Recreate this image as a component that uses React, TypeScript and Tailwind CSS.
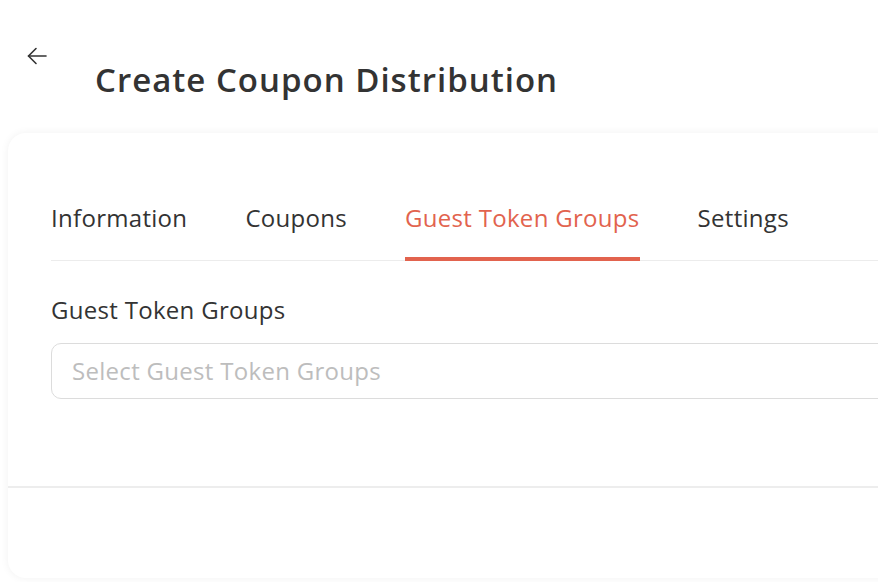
import React from 'react';

const tabs = ['Information', 'Coupons', 'Guest Token Groups', 'Settings'];

function App() {
  const active = 2;

  return (
    <div className="h-[582px] w-[878px] overflow-hidden bg-white text-[#333] font-['Open_Sans',sans-serif]">
      {/* Header */}
      <div className="pl-[25px] pt-[44px]">
        <button className="block h-6 w-6 text-[#333]">
          <svg viewBox="0 0 24 24" width="24" height="24" fill="none" stroke="currentColor" strokeWidth="1.6" strokeLinecap="round" strokeLinejoin="round">
            <path d="M21 12H3.5" />
            <path d="M11 4.5L3.5 12L11 19.5" />
          </svg>
        </button>
        <h1 className="ml-[70px] mt-[-8px] text-[33px] font-semibold leading-[40px] tracking-[1px] text-[#333]">
          Create Coupon Distribution
        </h1>
      </div>

      {/* Card */}
      <div className="ml-2 mt-[33px] w-[1000px] rounded-[18px] bg-white shadow-[0_0_8px_rgba(0,0,0,0.06)]">
        <div className="px-[43px] pt-[70px]">
          <div className="flex gap-[58px] border-b border-[#ececec]">
            {tabs.map((t, i) => (
              <div
                key={t}
                className={
                  'pb-[24px] text-[24px] leading-[30px] tracking-[0.3px] ' +
                  (i === active
                    ? 'border-b-4 border-[#e2634e] text-[#e2634e] mb-[-1px]'
                    : 'border-b-4 border-transparent text-[#333] mb-[-1px]')
                }
              >
                {t}
              </div>
            ))}
          </div>

          <div className="pt-[34px] pb-[87px]">
            <label className="block text-[24px] leading-[30px] tracking-[0.3px] text-[#333]">Guest Token Groups</label>
            <div className="mt-[18px] flex h-[56px] items-center rounded-[10px] border border-[#dcdcdc] px-5">
              <span className="text-[24px] tracking-[0.3px] text-[#bdbdbd]">Select Guest Token Groups</span>
            </div>
          </div>
        </div>
        <div className="h-[92px] border-t-2 border-[#ededed]" />
      </div>
    </div>
  );
}

export default App;
